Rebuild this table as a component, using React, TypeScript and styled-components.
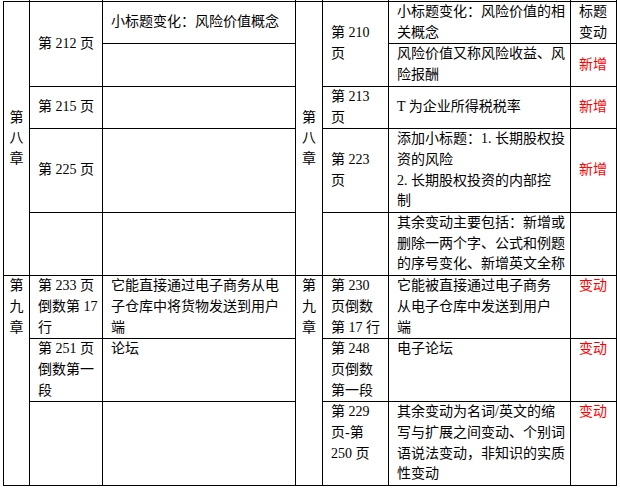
import React from 'react';
import styled, { createGlobalStyle } from 'styled-components';

const GlobalStyle = createGlobalStyle`
  body {
    margin: 0;
    background: #fff;
  }
`;

const Page = styled.div`
  padding-left: 3px;
  font-family: "Liberation Serif", "Noto Sans CJK SC", serif;
  font-size: 14px;
  line-height: 20.7px;
  color: #000;
`;

const Table = styled.table`
  border-collapse: collapse;
  table-layout: fixed;
  width: 614px;
`;

const Col = styled.col<{ $w: number }>`
  width: ${({ $w }) => $w}px;
`;

const Row = styled.tr<{ $top?: boolean }>`
  vertical-align: ${({ $top }) => ($top ? 'top' : 'middle')};
`;

// bottom edge of the header row, cut off by the screenshot
const StubCell = styled.td`
  height: 1px;
  padding: 0;
  font-size: 0;
  line-height: 0;
  border: 1px solid #000;
  border-top: none;
  &:first-child {
    border-left: none;
  }
`;

const Cell = styled.td`
  border: 1px solid #000;
  padding: 0 8px;
  white-space: nowrap;
  overflow: visible;
`;

const Chapter = styled(Cell)`
  padding: 0;
  text-align: center;
`;

const Status = styled(Cell)<{ $tone?: 'red' }>`
  color: ${({ $tone }) => ($tone === 'red' ? '#ff0000' : '#000')};
`;

const widths = [26, 73, 193, 27, 66, 182, 46];

const App: React.FC = () => {
  return (
    <>
      <GlobalStyle />
      <Page>
        <Table>
          <colgroup>
            {widths.map((w, i) => (
              <Col $w={w} key={i} />
            ))}
          </colgroup>
          <tbody>
            <tr>
              {widths.map((_, i) => (
                <StubCell key={i} />
              ))}
            </tr>
            <Row>
              <Chapter rowSpan={5}>
                第<br />八<br />章
              </Chapter>
              <Cell rowSpan={2}>第 212 页</Cell>
              <Cell>小标题变化：风险价值概念</Cell>
              <Chapter rowSpan={5}>
                第<br />八<br />章
              </Chapter>
              <Cell rowSpan={2}>
                第 210
                <br />页
              </Cell>
              <Cell>
                小标题变化：风险价值的相
                <br />
                关概念
              </Cell>
              <Status>
                标题
                <br />
                变动
              </Status>
            </Row>
            <Row>
              <Cell></Cell>
              <Cell>
                风险价值又称风险收益、风
                <br />
                险报酬
              </Cell>
              <Status $tone="red">新增</Status>
            </Row>
            <Row>
              <Cell>第 215 页</Cell>
              <Cell></Cell>
              <Cell>
                第 213
                <br />页
              </Cell>
              <Cell>T 为企业所得税税率</Cell>
              <Status $tone="red">新增</Status>
            </Row>
            <Row>
              <Cell>第 225 页</Cell>
              <Cell></Cell>
              <Cell>
                第 223
                <br />页
              </Cell>
              <Cell>
                添加小标题：1. 长期股权投
                <br />
                资的风险
                <br />
                2. 长期股权投资的内部控
                <br />制
              </Cell>
              <Status $tone="red">新增</Status>
            </Row>
            <Row>
              <Cell></Cell>
              <Cell></Cell>
              <Cell></Cell>
              <Cell>
                其余变动主要包括：新增或
                <br />
                删除一两个字、公式和例题
                <br />
                的序号变化、新增英文全称
              </Cell>
              <Status></Status>
            </Row>
            <Row $top>
              <Chapter rowSpan={3}>
                第<br />九<br />章
              </Chapter>
              <Cell>
                第 233 页<br />
                倒数第 17
                <br />行
              </Cell>
              <Cell>
                它能直接通过电子商务从电
                <br />
                子仓库中将货物发送到用户
                <br />端
              </Cell>
              <Chapter rowSpan={3}>
                第<br />九<br />章
              </Chapter>
              <Cell>
                第 230
                <br />
                页倒数
                <br />第 17 行
              </Cell>
              <Cell>
                它能被直接通过电子商务
                <br />
                从电子仓库中发送到用户
                <br />端
              </Cell>
              <Status $tone="red">变动</Status>
            </Row>
            <Row $top>
              <Cell>
                第 251 页<br />
                倒数第一
                <br />段
              </Cell>
              <Cell>论坛</Cell>
              <Cell>
                第 248
                <br />
                页倒数
                <br />
                第一段
              </Cell>
              <Cell>电子论坛</Cell>
              <Status $tone="red">变动</Status>
            </Row>
            <Row $top>
              <Cell></Cell>
              <Cell></Cell>
              <Cell>
                第 229
                <br />
                页-第
                <br />
                250 页
              </Cell>
              <Cell>
                其余变动为名词/英文的缩
                <br />
                写与扩展之间变动、个别词
                <br />
                语说法变动，非知识的实质
                <br />
                性变动
              </Cell>
              <Status $tone="red">变动</Status>
            </Row>
          </tbody>
        </Table>
      </Page>
    </>
  );
};

export default App;
